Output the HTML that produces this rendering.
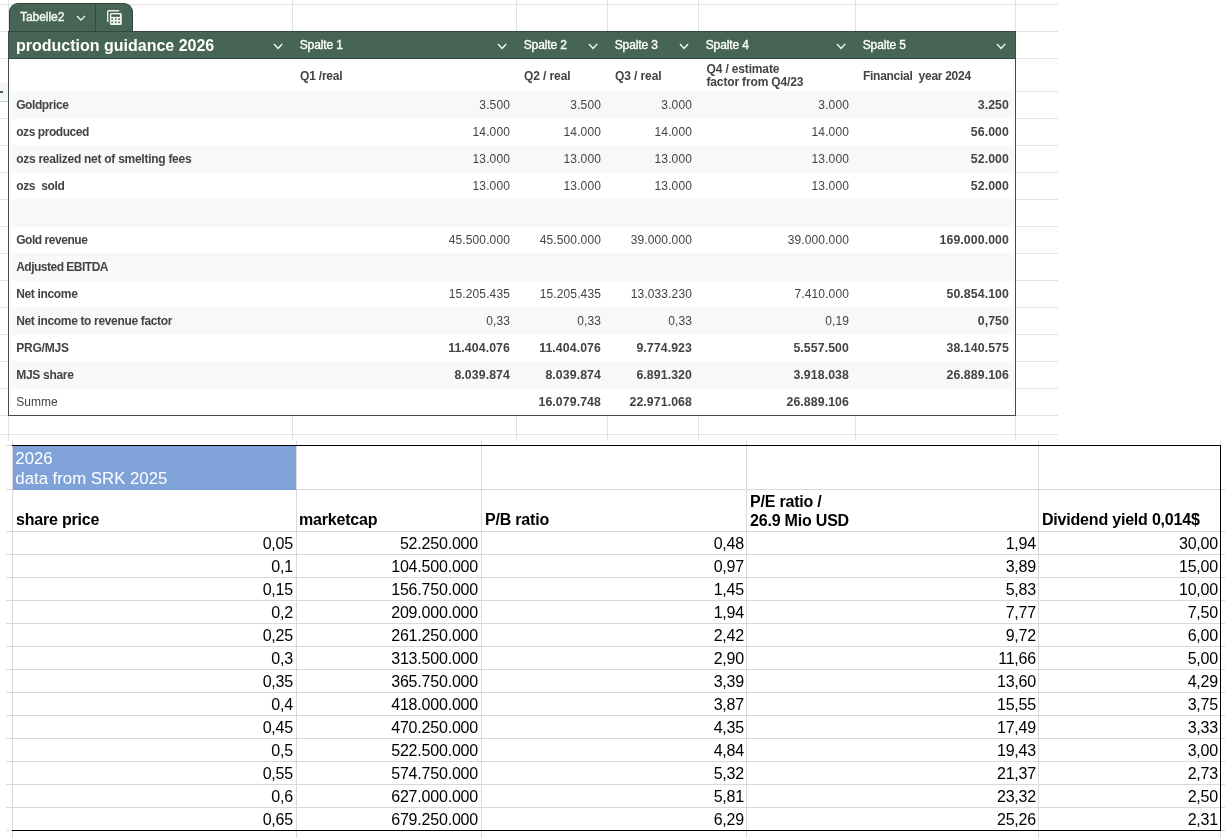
<!DOCTYPE html><html><head><meta charset='utf-8'><title>production guidance 2026</title><style>
html,body{margin:0;padding:0;background:#fff;}
body{width:1229px;height:838px;position:relative;overflow:hidden;font-family:"Liberation Sans",sans-serif;}
.a{position:absolute;}
.t{position:absolute;white-space:nowrap;line-height:1;}
.u{font-size:12px;color:#434343;}
.n{font-size:12px;color:#434343;letter-spacing:0.12px;}
.nb{font-size:12.3px;color:#434343;font-weight:bold;letter-spacing:0.1px;}
.ub{font-size:12px;color:#434343;font-weight:bold;letter-spacing:-0.33px;}
.r{text-align:right;}
.h{font-size:12px;color:#fff;font-weight:bold;letter-spacing:-0.35px;}
.l{font-size:16px;color:#000;letter-spacing:-0.2px;}
.lb{font-size:16px;color:#000;font-weight:bold;letter-spacing:-0.2px;}
</style></head><body><div id='w' style='position:absolute;left:0;top:0;width:1229px;height:838px;will-change:transform'>
<div class='a' style='left:0;top:4px;width:1058px;height:1px;background:#e2e3e3'></div>
<div class='a' style='left:0;top:31px;width:1058px;height:1px;background:#e2e3e3'></div>
<div class='a' style='left:0;top:58px;width:1058px;height:1px;background:#e2e3e3'></div>
<div class='a' style='left:0;top:91px;width:1058px;height:1px;background:#e2e3e3'></div>
<div class='a' style='left:0;top:118px;width:1058px;height:1px;background:#e2e3e3'></div>
<div class='a' style='left:0;top:145px;width:1058px;height:1px;background:#e2e3e3'></div>
<div class='a' style='left:0;top:172px;width:1058px;height:1px;background:#e2e3e3'></div>
<div class='a' style='left:0;top:199px;width:1058px;height:1px;background:#e2e3e3'></div>
<div class='a' style='left:0;top:226px;width:1058px;height:1px;background:#e2e3e3'></div>
<div class='a' style='left:0;top:253px;width:1058px;height:1px;background:#e2e3e3'></div>
<div class='a' style='left:0;top:280px;width:1058px;height:1px;background:#e2e3e3'></div>
<div class='a' style='left:0;top:307px;width:1058px;height:1px;background:#e2e3e3'></div>
<div class='a' style='left:0;top:334px;width:1058px;height:1px;background:#e2e3e3'></div>
<div class='a' style='left:0;top:361px;width:1058px;height:1px;background:#e2e3e3'></div>
<div class='a' style='left:0;top:388px;width:1058px;height:1px;background:#e2e3e3'></div>
<div class='a' style='left:0;top:415px;width:1058px;height:1px;background:#e2e3e3'></div>
<div class='a' style='left:0;top:434px;width:1058px;height:1px;background:#e2e3e3'></div>
<div class='a' style='left:8px;top:0;width:1px;height:441px;background:#e2e3e3'></div>
<div class='a' style='left:292px;top:0;width:1px;height:441px;background:#e2e3e3'></div>
<div class='a' style='left:516px;top:0;width:1px;height:441px;background:#e2e3e3'></div>
<div class='a' style='left:607px;top:0;width:1px;height:441px;background:#e2e3e3'></div>
<div class='a' style='left:698px;top:0;width:1px;height:441px;background:#e2e3e3'></div>
<div class='a' style='left:855px;top:0;width:1px;height:441px;background:#e2e3e3'></div>
<div class='a' style='left:1015px;top:0;width:1px;height:441px;background:#e2e3e3'></div>
<div class='a' style='left:8px;top:31px;width:1008px;height:385px;background:#fff'></div>
<div class='a' style='left:10px;top:91px;width:1005px;height:28px;background:#f6f8f9'></div>
<div class='a' style='left:10px;top:145px;width:1005px;height:28px;background:#f6f8f9'></div>
<div class='a' style='left:10px;top:199px;width:1005px;height:28px;background:#f6f8f9'></div>
<div class='a' style='left:10px;top:253px;width:1005px;height:28px;background:#f6f8f9'></div>
<div class='a' style='left:10px;top:307px;width:1005px;height:28px;background:#f6f8f9'></div>
<div class='a' style='left:10px;top:361px;width:1005px;height:28px;background:#f6f8f9'></div>
<div class='a' style='left:8px;top:31px;width:1008px;height:28px;background:#466554;box-shadow:inset 0 1px 0 #33493d, inset 0 -1px 0 #33493d'></div>
<div class='a' style='left:9px;top:3px;width:124px;height:28px;background:#466554;border-radius:9px 9px 0 0;border:1px solid #33493d;border-bottom:none;box-sizing:border-box'></div>
<div class='a' style='left:95px;top:3px;width:1px;height:28px;background:#33493d'></div>
<div class='a' style='left:8px;top:31px;width:1006px;height:384px;border:1px solid #3f4d48;border-top:none;box-sizing:content-box'></div>
<div class='a' style='left:0;top:82px;width:8px;height:19px;background:#f5f6f7;border-bottom:1px solid #d0d0d0'></div>
<div class='a' style='left:0;top:91px;width:3px;height:2px;background:#555'></div>
<div class='t h' style='left:20px;top:11px;font-weight:normal;letter-spacing:-0.05px;color:#f4f8f5;-webkit-text-stroke:0.4px #f4f8f5'>Tabelle2</div>
<svg class='a' style='left:74.70px;top:14.40px' width='11.90' height='8.10' viewBox='-2 -2 11.90 8.10'><path d='M0 0 L3.95 4.10 L7.90 0' fill='none' stroke='#f4f8f5' stroke-width='1.3' stroke-linecap='butt' stroke-linejoin='miter'/></svg>
<svg class='a' style='left:105px;top:8px' width='20' height='20' viewBox='105 8 20 20'>
<path d='M107.7 22.1 V11.9 Q107.7 10.7 108.9 10.7 H119.1' fill='none' stroke='#e9f0eb' stroke-width='1.4'/>
<rect x='109.9' y='12.9' width='11.9' height='12.2' rx='1.4' fill='#eef4f0'/>
<rect x='111.3' y='14.4' width='8.6' height='2.4' fill='#3f5c4c'/>
<g fill='#4a6657'>
<rect x='111.3' y='18.4' width='1.7' height='1.5'/><rect x='114.8' y='18.4' width='1.7' height='1.5'/><rect x='118.2' y='18.4' width='1.7' height='1.5'/>
<rect x='111.3' y='21.6' width='1.7' height='1.5'/><rect x='114.8' y='21.6' width='1.7' height='1.5'/><rect x='118.2' y='21.6' width='1.7' height='1.5'/>
</g></svg>
<div class='t' style='left:16px;top:38px;font-size:16px;font-weight:bold;color:#fff;letter-spacing:0px'>production guidance 2026</div>
<svg class='a' style='left:271.50px;top:41.80px' width='12.20' height='8.40' viewBox='-2 -2 12.20 8.40'><path d='M0 0 L4.10 4.40 L8.20 0' fill='none' stroke='#f4f8f5' stroke-width='1.4' stroke-linecap='butt' stroke-linejoin='miter'/></svg>
<div class='t h' style='left:299.7px;top:39px;font-weight:normal;letter-spacing:-0.1px;-webkit-text-stroke:0.35px #fff'>Spalte 1</div>
<svg class='a' style='left:495.50px;top:41.80px' width='12.20' height='8.40' viewBox='-2 -2 12.20 8.40'><path d='M0 0 L4.10 4.40 L8.20 0' fill='none' stroke='#f4f8f5' stroke-width='1.4' stroke-linecap='butt' stroke-linejoin='miter'/></svg>
<div class='t h' style='left:523.7px;top:39px;font-weight:normal;letter-spacing:-0.1px;-webkit-text-stroke:0.35px #fff'>Spalte 2</div>
<svg class='a' style='left:586.50px;top:41.80px' width='12.20' height='8.40' viewBox='-2 -2 12.20 8.40'><path d='M0 0 L4.10 4.40 L8.20 0' fill='none' stroke='#f4f8f5' stroke-width='1.4' stroke-linecap='butt' stroke-linejoin='miter'/></svg>
<div class='t h' style='left:614.7px;top:39px;font-weight:normal;letter-spacing:-0.1px;-webkit-text-stroke:0.35px #fff'>Spalte 3</div>
<svg class='a' style='left:677.50px;top:41.80px' width='12.20' height='8.40' viewBox='-2 -2 12.20 8.40'><path d='M0 0 L4.10 4.40 L8.20 0' fill='none' stroke='#f4f8f5' stroke-width='1.4' stroke-linecap='butt' stroke-linejoin='miter'/></svg>
<div class='t h' style='left:705.7px;top:39px;font-weight:normal;letter-spacing:-0.1px;-webkit-text-stroke:0.35px #fff'>Spalte 4</div>
<svg class='a' style='left:834.50px;top:41.80px' width='12.20' height='8.40' viewBox='-2 -2 12.20 8.40'><path d='M0 0 L4.10 4.40 L8.20 0' fill='none' stroke='#f4f8f5' stroke-width='1.4' stroke-linecap='butt' stroke-linejoin='miter'/></svg>
<div class='t h' style='left:862.7px;top:39px;font-weight:normal;letter-spacing:-0.1px;-webkit-text-stroke:0.35px #fff'>Spalte 5</div>
<svg class='a' style='left:994.50px;top:41.80px' width='12.20' height='8.40' viewBox='-2 -2 12.20 8.40'><path d='M0 0 L4.10 4.40 L8.20 0' fill='none' stroke='#f4f8f5' stroke-width='1.4' stroke-linecap='butt' stroke-linejoin='miter'/></svg>
<div class='t ub' style='left:300px;top:70px;letter-spacing:-0.2px'>Q1 /real</div>
<div class='t ub' style='left:524px;top:70px;letter-spacing:-0.2px'><span style='letter-spacing:-0.1px'>Q2 / real</span></div>
<div class='t ub' style='left:615px;top:70px;letter-spacing:-0.2px'><span style='letter-spacing:-0.1px'>Q3 / real</span></div>
<div class='t ub' style='left:863px;top:70px;letter-spacing:-0.2px'><span style='letter-spacing:-0.28px'>Financial&nbsp; year 2024</span></div>
<div class='t ub' style='left:706.5px;top:62.5px;line-height:13.7px;letter-spacing:-0.15px'>Q4 / estimate<br>factor from Q4/23</div>
<div class='t ub' style='left:16.2px;top:99px;letter-spacing:-0.42px'>Goldprice</div>
<div class='t n r' style='right:719px;top:99px'>3.500</div>
<div class='t n r' style='right:628px;top:99px'>3.500</div>
<div class='t n r' style='right:537px;top:99px'>3.000</div>
<div class='t n r' style='right:380px;top:99px'>3.000</div>
<div class='t nb r' style='right:220px;top:99px'>3.250</div>
<div class='t ub' style='left:16.2px;top:126px;letter-spacing:-0.44px'>ozs produced</div>
<div class='t n r' style='right:719px;top:126px'>14.000</div>
<div class='t n r' style='right:628px;top:126px'>14.000</div>
<div class='t n r' style='right:537px;top:126px'>14.000</div>
<div class='t n r' style='right:380px;top:126px'>14.000</div>
<div class='t nb r' style='right:220px;top:126px'>56.000</div>
<div class='t ub' style='left:16.2px;top:153px;letter-spacing:-0.27px'>ozs realized net of smelting fees</div>
<div class='t n r' style='right:719px;top:153px'>13.000</div>
<div class='t n r' style='right:628px;top:153px'>13.000</div>
<div class='t n r' style='right:537px;top:153px'>13.000</div>
<div class='t n r' style='right:380px;top:153px'>13.000</div>
<div class='t nb r' style='right:220px;top:153px'>52.000</div>
<div class='t ub' style='left:16.2px;top:180px;letter-spacing:-0.33px'>ozs&nbsp; sold</div>
<div class='t n r' style='right:719px;top:180px'>13.000</div>
<div class='t n r' style='right:628px;top:180px'>13.000</div>
<div class='t n r' style='right:537px;top:180px'>13.000</div>
<div class='t n r' style='right:380px;top:180px'>13.000</div>
<div class='t nb r' style='right:220px;top:180px'>52.000</div>
<div class='t ub' style='left:16.2px;top:234px;letter-spacing:-0.46px'>Gold revenue</div>
<div class='t n r' style='right:719px;top:234px'>45.500.000</div>
<div class='t n r' style='right:628px;top:234px'>45.500.000</div>
<div class='t n r' style='right:537px;top:234px'>39.000.000</div>
<div class='t n r' style='right:380px;top:234px'>39.000.000</div>
<div class='t nb r' style='right:220px;top:234px'>169.000.000</div>
<div class='t ub' style='left:16.2px;top:261px;letter-spacing:-0.5px'>Adjusted EBITDA</div>
<div class='t ub' style='left:16.2px;top:288px;letter-spacing:-0.34px'>Net income</div>
<div class='t n r' style='right:719px;top:288px'>15.205.435</div>
<div class='t n r' style='right:628px;top:288px'>15.205.435</div>
<div class='t n r' style='right:537px;top:288px'>13.033.230</div>
<div class='t n r' style='right:380px;top:288px'>7.410.000</div>
<div class='t nb r' style='right:220px;top:288px'>50.854.100</div>
<div class='t ub' style='left:16.2px;top:315px;letter-spacing:-0.34px'>Net income to revenue factor</div>
<div class='t n r' style='right:719px;top:315px'>0,33</div>
<div class='t n r' style='right:628px;top:315px'>0,33</div>
<div class='t n r' style='right:537px;top:315px'>0,33</div>
<div class='t n r' style='right:380px;top:315px'>0,19</div>
<div class='t nb r' style='right:220px;top:315px'>0,750</div>
<div class='t ub' style='left:16.2px;top:342px;letter-spacing:-0.2px'>PRG/MJS</div>
<div class='t nb r' style='right:719px;top:342px'>11.404.076</div>
<div class='t nb r' style='right:628px;top:342px'>11.404.076</div>
<div class='t nb r' style='right:537px;top:342px'>9.774.923</div>
<div class='t nb r' style='right:380px;top:342px'>5.557.500</div>
<div class='t nb r' style='right:220px;top:342px'>38.140.575</div>
<div class='t ub' style='left:16.2px;top:369px;letter-spacing:-0.29px'>MJS share</div>
<div class='t nb r' style='right:719px;top:369px'>8.039.874</div>
<div class='t nb r' style='right:628px;top:369px'>8.039.874</div>
<div class='t nb r' style='right:537px;top:369px'>6.891.320</div>
<div class='t nb r' style='right:380px;top:369px'>3.918.038</div>
<div class='t nb r' style='right:220px;top:369px'>26.889.106</div>
<div class='t u' style='left:16.2px;top:396px;letter-spacing:0.03px'>Summe</div>
<div class='t nb r' style='right:628px;top:396px'>16.079.748</div>
<div class='t nb r' style='right:537px;top:396px'>22.971.068</div>
<div class='t nb r' style='right:380px;top:396px'>26.889.106</div>
<div class='a' style='left:6px;top:489px;width:1219px;height:1px;background:#d9d9d9'></div>
<div class='a' style='left:6px;top:531px;width:1219px;height:1px;background:#d9d9d9'></div>
<div class='a' style='left:6px;top:554px;width:1219px;height:1px;background:#d9d9d9'></div>
<div class='a' style='left:6px;top:577px;width:1219px;height:1px;background:#d9d9d9'></div>
<div class='a' style='left:6px;top:600px;width:1219px;height:1px;background:#d9d9d9'></div>
<div class='a' style='left:6px;top:623px;width:1219px;height:1px;background:#d9d9d9'></div>
<div class='a' style='left:6px;top:646px;width:1219px;height:1px;background:#d9d9d9'></div>
<div class='a' style='left:6px;top:669px;width:1219px;height:1px;background:#d9d9d9'></div>
<div class='a' style='left:6px;top:692px;width:1219px;height:1px;background:#d9d9d9'></div>
<div class='a' style='left:6px;top:715px;width:1219px;height:1px;background:#d9d9d9'></div>
<div class='a' style='left:6px;top:738px;width:1219px;height:1px;background:#d9d9d9'></div>
<div class='a' style='left:6px;top:761px;width:1219px;height:1px;background:#d9d9d9'></div>
<div class='a' style='left:6px;top:784px;width:1219px;height:1px;background:#d9d9d9'></div>
<div class='a' style='left:6px;top:807px;width:1219px;height:1px;background:#d9d9d9'></div>
<div class='a' style='left:6px;top:445px;width:6px;height:1px;background:#d9d9d9'></div>
<div class='a' style='left:6px;top:830px;width:6px;height:1px;background:#d9d9d9'></div>
<div class='a' style='left:1221px;top:830px;width:4px;height:1px;background:#d9d9d9'></div>
<div class='a' style='left:12px;top:441px;width:1px;height:397px;background:#d9d9d9'></div>
<div class='a' style='left:296px;top:441px;width:1px;height:397px;background:#d9d9d9'></div>
<div class='a' style='left:481px;top:441px;width:1px;height:397px;background:#d9d9d9'></div>
<div class='a' style='left:746px;top:441px;width:1px;height:397px;background:#d9d9d9'></div>
<div class='a' style='left:1038px;top:441px;width:1px;height:397px;background:#d9d9d9'></div>
<div class='a' style='left:1220px;top:441px;width:1px;height:397px;background:#d9d9d9'></div>
<div class='a' style='left:13px;top:446px;width:283px;height:44px;background:#7fa3d9'></div>
<div class='t' style='left:15.3px;top:449px;font-size:16.8px;line-height:20px;color:#fff'>2026<br>data from SRK 2025</div>
<div class='a' style='left:12px;top:445px;width:1209px;height:1px;background:#000'></div>
<div class='a' style='left:1220px;top:445px;width:1px;height:386px;background:#000'></div>
<div class='a' style='left:12px;top:830px;width:1209px;height:1px;background:#000'></div>
<div class='t lb' style='left:16px;top:512px'>share price</div>
<div class='t lb' style='left:299px;top:512px'>marketcap</div>
<div class='t lb' style='left:485px;top:512px'>P/B ratio</div>
<div class='t lb' style='left:1042px;top:512px'>Dividend yield 0,014$</div>
<div class='t lb' style='left:750px;top:492px;line-height:19px'>P/E ratio /<br>26.9 Mio USD</div>
<div class='t l r' style='right:936px;top:536px'>0,05</div>
<div class='t l r' style='right:751px;top:536px'>52.250.000</div>
<div class='t l r' style='right:485px;top:536px'>0,48</div>
<div class='t l r' style='right:193px;top:536px'>1,94</div>
<div class='t l r' style='right:11px;top:536px'>30,00</div>
<div class='t l r' style='right:936px;top:559px'>0,1</div>
<div class='t l r' style='right:751px;top:559px'>104.500.000</div>
<div class='t l r' style='right:485px;top:559px'>0,97</div>
<div class='t l r' style='right:193px;top:559px'>3,89</div>
<div class='t l r' style='right:11px;top:559px'>15,00</div>
<div class='t l r' style='right:936px;top:582px'>0,15</div>
<div class='t l r' style='right:751px;top:582px'>156.750.000</div>
<div class='t l r' style='right:485px;top:582px'>1,45</div>
<div class='t l r' style='right:193px;top:582px'>5,83</div>
<div class='t l r' style='right:11px;top:582px'>10,00</div>
<div class='t l r' style='right:936px;top:605px'>0,2</div>
<div class='t l r' style='right:751px;top:605px'>209.000.000</div>
<div class='t l r' style='right:485px;top:605px'>1,94</div>
<div class='t l r' style='right:193px;top:605px'>7,77</div>
<div class='t l r' style='right:11px;top:605px'>7,50</div>
<div class='t l r' style='right:936px;top:628px'>0,25</div>
<div class='t l r' style='right:751px;top:628px'>261.250.000</div>
<div class='t l r' style='right:485px;top:628px'>2,42</div>
<div class='t l r' style='right:193px;top:628px'>9,72</div>
<div class='t l r' style='right:11px;top:628px'>6,00</div>
<div class='t l r' style='right:936px;top:651px'>0,3</div>
<div class='t l r' style='right:751px;top:651px'>313.500.000</div>
<div class='t l r' style='right:485px;top:651px'>2,90</div>
<div class='t l r' style='right:193px;top:651px'>11,66</div>
<div class='t l r' style='right:11px;top:651px'>5,00</div>
<div class='t l r' style='right:936px;top:674px'>0,35</div>
<div class='t l r' style='right:751px;top:674px'>365.750.000</div>
<div class='t l r' style='right:485px;top:674px'>3,39</div>
<div class='t l r' style='right:193px;top:674px'>13,60</div>
<div class='t l r' style='right:11px;top:674px'>4,29</div>
<div class='t l r' style='right:936px;top:697px'>0,4</div>
<div class='t l r' style='right:751px;top:697px'>418.000.000</div>
<div class='t l r' style='right:485px;top:697px'>3,87</div>
<div class='t l r' style='right:193px;top:697px'>15,55</div>
<div class='t l r' style='right:11px;top:697px'>3,75</div>
<div class='t l r' style='right:936px;top:720px'>0,45</div>
<div class='t l r' style='right:751px;top:720px'>470.250.000</div>
<div class='t l r' style='right:485px;top:720px'>4,35</div>
<div class='t l r' style='right:193px;top:720px'>17,49</div>
<div class='t l r' style='right:11px;top:720px'>3,33</div>
<div class='t l r' style='right:936px;top:743px'>0,5</div>
<div class='t l r' style='right:751px;top:743px'>522.500.000</div>
<div class='t l r' style='right:485px;top:743px'>4,84</div>
<div class='t l r' style='right:193px;top:743px'>19,43</div>
<div class='t l r' style='right:11px;top:743px'>3,00</div>
<div class='t l r' style='right:936px;top:766px'>0,55</div>
<div class='t l r' style='right:751px;top:766px'>574.750.000</div>
<div class='t l r' style='right:485px;top:766px'>5,32</div>
<div class='t l r' style='right:193px;top:766px'>21,37</div>
<div class='t l r' style='right:11px;top:766px'>2,73</div>
<div class='t l r' style='right:936px;top:789px'>0,6</div>
<div class='t l r' style='right:751px;top:789px'>627.000.000</div>
<div class='t l r' style='right:485px;top:789px'>5,81</div>
<div class='t l r' style='right:193px;top:789px'>23,32</div>
<div class='t l r' style='right:11px;top:789px'>2,50</div>
<div class='t l r' style='right:936px;top:812px'>0,65</div>
<div class='t l r' style='right:751px;top:812px'>679.250.000</div>
<div class='t l r' style='right:485px;top:812px'>6,29</div>
<div class='t l r' style='right:193px;top:812px'>25,26</div>
<div class='t l r' style='right:11px;top:812px'>2,31</div>
</div></body></html>
